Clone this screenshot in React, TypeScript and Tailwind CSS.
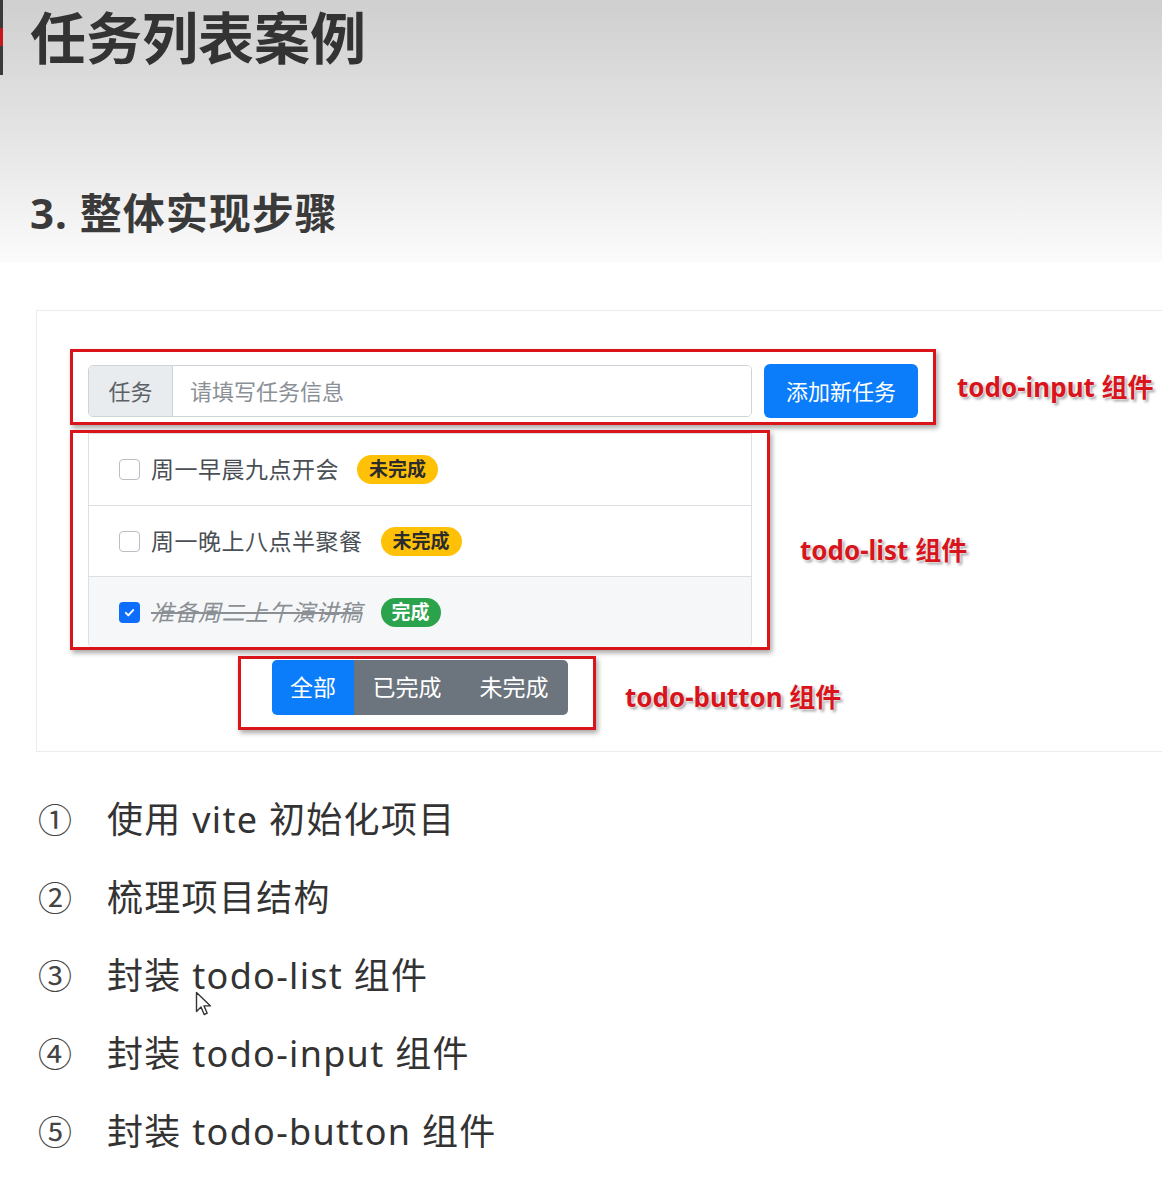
import React from 'react';

const cjk = "font-['Noto_Sans','Noto_Sans_CJK_SC',sans-serif]";
const redLabel =
  "font-['Noto_Sans','Noto_Sans_CJK_SC',sans-serif] font-bold text-[26px] leading-[30px] text-[#d8141c] whitespace-nowrap [text-shadow:0_0_2px_#fff,0_0_3px_#fff,2px_2px_3px_rgba(0,0,0,0.45)]";
const redBox = 'border-[3px] border-[#d9141b] shadow-[2px_3px_5px_rgba(0,0,0,0.35)]';

type Todo = { id: number; task: string; done: boolean };

const todos: Todo[] = [
  { id: 1, task: '周一早晨九点开会', done: false },
  { id: 2, task: '周一晚上八点半聚餐', done: false },
  { id: 3, task: '准备周二上午演讲稿', done: true },
];

const steps = [
  ['①', '使用 vite 初始化项目'],
  ['②', '梳理项目结构'],
  ['③', '封装 todo-list 组件'],
  ['④', '封装 todo-input 组件'],
  ['⑤', '封装 todo-button 组件'],
];

const Checkbox = ({ checked }: { checked: boolean }) =>
  checked ? (
    <span className="w-[21px] h-[21px] rounded-[4px] bg-[#0d6efd] flex items-center justify-center shrink-0">
      <svg width="13" height="13" viewBox="0 0 16 16" fill="none">
        <path d="M3.5 8.5l3 3 6-6.5" stroke="#fff" strokeWidth="2.4" strokeLinecap="round" strokeLinejoin="round" />
      </svg>
    </span>
  ) : (
    <span className="w-[21px] h-[21px] rounded-[4px] border border-[#b9bec4] bg-white shrink-0" />
  );

// Todo list rows (bootstrap list-group look)
const TodoList = () => (
  <ul className="w-[664px] border border-[#dcdfe3] rounded-b-[5px] overflow-hidden">
    {todos.map((t, i) => (
      <li
        key={t.id}
        className={`h-[71px] flex items-center pl-[30px] ${i > 0 ? 'border-t border-[#dcdfe3]' : ''} ${t.done ? 'bg-[#f6f7f8]' : 'bg-white'}`}
      >
        <Checkbox checked={t.done} />
        <span
          className={`ml-[11px] text-[23px] tracking-[0.5px] ${t.done ? 'italic line-through text-[#8a8f94]' : 'text-[#4a4f55]'}`}
        >
          {t.task}
        </span>
        {t.done ? (
          <span className="ml-[18px] h-[29px] px-[11px] rounded-full bg-[#2ba24c] text-white text-[19px] font-bold flex items-center">
            完成
          </span>
        ) : (
          <span className="ml-[18px] h-[29px] px-[12px] rounded-full bg-[#ffc107] text-[#2b2b2b] text-[19px] font-bold flex items-center">
            未完成
          </span>
        )}
      </li>
    ))}
  </ul>
);

const Cursor = () => (
  <svg className="absolute left-[195px] top-[991px]" width="18" height="26" viewBox="0 0 18 26">
    <path d="M1.5 1.5v19l4.5-4.5 3.2 7.5 3-1.3-3.2-7.3h6.5z" fill="#fff" stroke="#333" strokeWidth="1.4" strokeLinejoin="round" />
  </svg>
);

export default function App() {
  return (
    <div className={`relative w-[1162px] h-[1180px] overflow-hidden bg-white ${cjk}`}>
      {/* header with grey gradient */}
      <div className="h-[262px] bg-gradient-to-b from-[#cfcfcf] via-[#e4e4e4] to-[#fbfbfb]">
        <div className="flex items-start">
          <div className="w-[3px] h-[75px] flex flex-col">
            <div className="h-[28px] bg-[#3a3a3a]" />
            <div className="h-[18px] bg-[#c8161d]" />
            <div className="flex-1 bg-[#3a3a3a]" />
          </div>
          <h1 className="ml-[27px] font-['Noto_Sans_CJK_SC',sans-serif] text-[56px] leading-[70px] font-bold text-[#333]">
            任务列表案例
          </h1>
        </div>
        <h2 className="mt-[116px] ml-[30px] text-[42px] leading-[44px] font-bold text-[#3a3a3a] tracking-[1px]">3. 整体实现步骤</h2>
      </div>

      {/* demo card */}
      <div className="mt-[48px] ml-[36px] w-[1150px] border border-[#ececec] bg-white pt-[38px] pl-[33px] pb-[21px]">
        {/* todo-input */}
        <div className="flex items-center">
          <div className={`${redBox} w-[866px] h-[76px] pl-[15px] pt-[13px] flex items-start`}>
            <div className="w-[664px] h-[52px] flex rounded-[5px] border border-[#ced4da] overflow-hidden">
              <span className="w-[84px] bg-[#e9ecef] border-r border-[#ced4da] flex items-center justify-center text-[22px] text-[#5b6167]">
                任务
              </span>
              <span className="flex-1 bg-white flex items-center pl-[17px] text-[22px] text-[#8a9096]">请填写任务信息</span>
            </div>
            <button className="ml-[12px] -mt-px w-[154px] h-[54px] rounded-[6px] bg-[#0b7dfb] text-white text-[22px]">
              添加新任务
            </button>
          </div>
          <span className={`ml-[21px] ${redLabel}`}>todo-input 组件</span>
        </div>

        {/* todo-list */}
        <div className="mt-[5px] flex items-start">
          <div className={`${redBox} w-[700px] h-[220px] pl-[15px] overflow-hidden`}>
            <TodoList />
          </div>
          <span className={`ml-[30px] mt-[105px] ${redLabel}`}>todo-list 组件</span>
        </div>

        {/* todo-button */}
        <div className="mt-[6px] ml-[168px] flex items-center">
          <div className={`${redBox} w-[358px] h-[74px] pl-[31px] pt-px`}>
            <div className="flex h-[55px] w-[296px] rounded-[5px] overflow-hidden text-[23px] text-white">
              <button className="w-[82px] bg-[#0b7dfb]">全部</button>
              <button className="w-[106px] bg-[#6c757d]">已完成</button>
              <button className="w-[108px] bg-[#6c757d]">未完成</button>
            </div>
          </div>
          <span className={`ml-[29px] mt-[8px] ${redLabel}`}>todo-button 组件</span>
        </div>
      </div>

      {/* steps */}
      <ol className="mt-[29px] pl-[38px]">
        {steps.map(([n, s]) => (
          <li key={n} className="h-[78px] flex items-center text-[36px] text-[#333]">
            <span className="w-[69px] text-[34px] text-[#444]">{n}</span>
            <span className="tracking-[1.3px]">{s}</span>
          </li>
        ))}
      </ol>

      <Cursor />
    </div>
  );
}
